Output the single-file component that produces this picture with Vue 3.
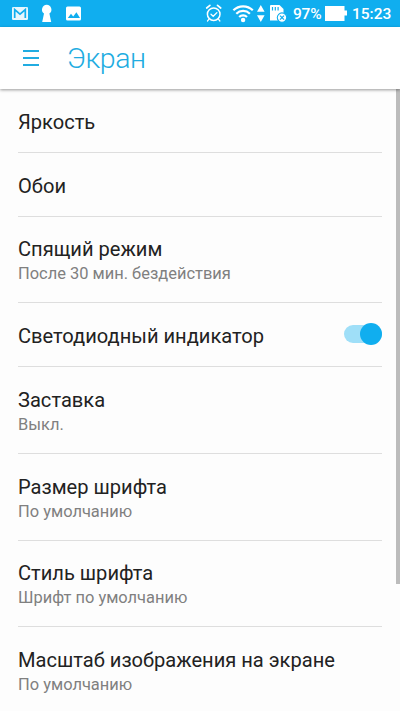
<script setup>
const rows = [
  { title: 'Яркость' },
  { title: 'Обои' },
  { title: 'Спящий режим', summary: 'После 30 мин. бездействия' },
  { title: 'Светодиодный индикатор', toggle: true },
  { title: 'Заставка', summary: 'Выкл.' },
  { title: 'Размер шрифта', summary: 'По умолчанию' },
  { title: 'Стиль шрифта', summary: 'Шрифт по умолчанию' },
  { title: 'Масштаб изображения на экране', summary: 'По умолчанию' },
]
</script>

<template>
  <div class="screen">
    <div class="status">
      <svg class="left-icons" width="100" height="27" viewBox="0 0 100 27">
        <rect x="12" y="7" width="16" height="13" rx="1.2" fill="#e6f6fd" />
        <path d="M14.7 18V9.6L20 14.2l5.300-4.600V18" fill="none" stroke="#10aeef" stroke-width="1.700" />
        <path d="M46.700 4.800a4.800 4.800 0 0 1 2.700 8.700L51.200 22h-9l1.800-8.500a4.800 4.800 0 0 1 2.700-8.700z" fill="#fff" />
        <rect x="66" y="6.500" width="15" height="14" rx="1.500" fill="#fff" />
        <path d="M67.800 18l3.200-4.200 2.200 2.700 3.200-4.200 3.600 5.700z" fill="#10aeef" />
      </svg>
      <svg class="right-icons" width="90" height="27" viewBox="200 0 90 27">
        <g fill="none" stroke="#fff" stroke-linecap="round">
          <circle cx="213.700" cy="14.200" r="6.300" stroke-width="1.500" />
          <path d="M206.700 8l3.200-2.600M220.700 8l-3.200-2.600" stroke-width="1.700" />
          <path d="M211 14.200l2.200 2.100 3.700-3.700" stroke-width="1.300" />
          <path d="M208.800 19.400l-1.300 1.600M218.600 19.400l1.300 1.600" stroke-width="1.200" />
        </g>
        <g fill="none" stroke="#fff" stroke-width="2.200">
          <path d="M233.400 10.300a13.800 13.800 0 0 1 19.400 0" />
          <path d="M236.300 13.700a9.700 9.700 0 0 1 13.600 0" />
          <path d="M239.200 17a5.500 5.500 0 0 1 7.800 0" />
        </g>
        <circle cx="243.100" cy="20" r="2.200" fill="#fff" />
        <path d="M257 11.800l3.800-6.800 3.800 6.800zM257 15.200l3.800 6.800 3.800-6.800z" fill="#fff" />
        <path d="M271 5H279.500l4 4V20.500h-13.500V6a1 1 0 0 1 1-1z" fill="#fff" />
        <path d="M272.500 7v3.500M275.300 7v3.500M278.100 7v3.500" stroke="#10aeef" stroke-width="1.200" />
        <circle cx="282" cy="17.600" r="4.700" fill="#fff" stroke="#10aeef" stroke-width="1.100" />
        <path d="M280 15.600l4 4M284 15.600l-4 4" stroke="#10aeef" stroke-width="1.300" />
      </svg>
      <span class="percent">97%</span>
      <svg class="battery" width="23" height="17" viewBox="0 0 23 17">
        <path d="M0 1h19.500v4.500H22v5h-2.500V16H0z" fill="#fff" />
      </svg>
      <span class="clock">15:23</span>
    </div>
    <header class="header">
      <div class="menu"><i></i><i></i><i></i></div>
      <h1>Экран</h1>
    </header>
    <main class="list">
      <div v-for="row in rows" :key="row.title" class="row" :class="{ double: row.summary }">
        <div class="label">
          <div class="title">{{ row.title }}</div>
          <div v-if="row.summary" class="summary">{{ row.summary }}</div>
        </div>
        <div v-if="row.toggle" class="switch"><div class="knob"></div></div>
      </div>
      <div class="scrollbar"></div>
    </main>
  </div>
</template>

<style>
body { background: #fdfdfd; overflow: hidden; }
</style>

<style scoped>
.screen {
  width: 400px;
  height: 711px;
  overflow: hidden;
  display: flex;
  flex-direction: column;
  background: #fdfdfd;
  font-family: Roboto, "Noto Sans", sans-serif;
}
.status {
  flex: none;
  height: 27px;
  display: flex;
  align-items: center;
  background: #10aeef;
  color: #fff;
  font-size: 15.500px;
  font-weight: 500;
  line-height: 27px;
}
.left-icons { margin-right: 100px; }
.percent { margin-left: 3px; width: 32px; white-space: nowrap; padding-top: 2px; letter-spacing: -0.200px; }
.battery { width: 23px; flex: none; }
.clock { margin-left: 4px; padding-top: 2px; }
.header {
  flex: none;
  position: relative;
  height: 62px;
  display: flex;
  align-items: center;
  background: #fff;
  color: #21ace1;
  box-shadow: 0 1px 3px rgba(0, 0, 0, 0.4);
  z-index: 1;
}
.menu {
  width: 16px;
  margin: 0 28px 0 23px;
  display: flex;
  flex-direction: column;
  gap: 5px;
}
.menu i { height: 2px; background: #21ace1; }
h1 {
  margin: 0;
  padding-top: 2px;
  font-weight: 300;
  font-size: 28.500px;
  letter-spacing: -0.400px;
  line-height: 36px;
}
.list { flex: none; position: relative; padding: 0 18px; }
.row {
  box-sizing: border-box;
  height: 64px;
  display: flex;
  justify-content: space-between;
  align-items: center;
  border-bottom: 1px solid #dedede;
}
.row:first-child { height: 63.600px; }
.row.double { height: 86.700px; }
.label { padding-top: 3.200px; }
.double .label { padding-top: 3.400px; }
.title {
  font-size: 20.100px;
  line-height: 24px;
  color: #222;
  white-space: nowrap;
}
.summary {
  margin-top: 2px;
  font-size: 16.450px;
  line-height: 22px;
  color: #808080;
  white-space: nowrap;
}
.switch {
  width: 38px;
  height: 18px;
  margin-bottom: 1px;
  border-radius: 9px;
  background: #9fdff8;
  display: flex;
  align-items: center;
  justify-content: flex-end;
}
.knob { width: 22px; height: 22px; border-radius: 50%; background: #10aeef; }
.scrollbar {
  position: absolute;
  top: 0;
  right: 0;
  width: 4px;
  height: 495px;
  background: #bcbcbc;
}
</style>
